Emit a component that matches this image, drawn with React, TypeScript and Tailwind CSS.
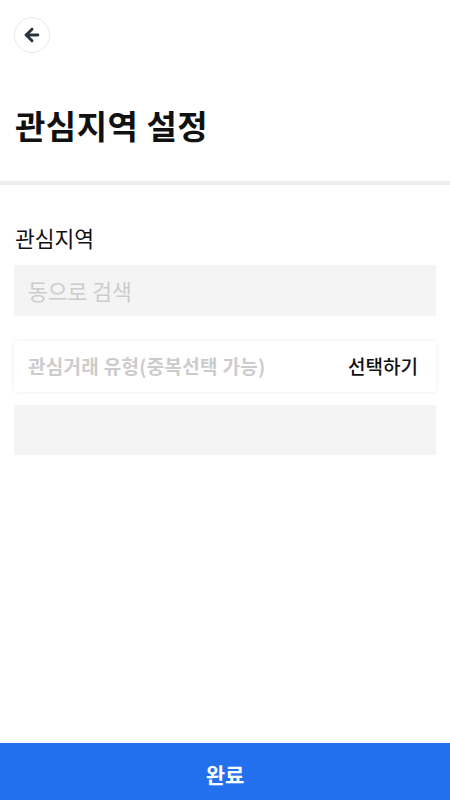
import { ArrowLeft } from "lucide-react";

const App = () => {
    return (
        <div
            className="relative w-[450px] h-[800px] bg-white flex flex-col"
            style={{ fontFamily: '"Noto Sans CJK KR", "Noto Sans", sans-serif' }}
        >
            {/* Header */}
            <div className="px-[14px] pt-[17px]">
                <button className="w-[36px] h-[36px] rounded-full border border-[#e8e8e8] flex items-center justify-center">
                    <ArrowLeft size={20} strokeWidth={3.5} className="text-[#2b3340]" />
                </button>
            </div>
            <h1 className="px-[15px] mt-[50px] text-[33px] font-bold leading-[44px] text-[#111] tracking-[0.5px]">관심지역 설정</h1>
            <div className="mt-[34px] h-[4px] bg-[#eeeeee]" />

            {/* Form */}
            <div className="px-[14px] pt-[37px] flex flex-col">
                <label className="text-[21.5px] leading-[32px] text-[#111] px-[1px]">관심지역</label>
                <input
                    type="text"
                    placeholder="동으로 검색"
                    className="mt-[11px] h-[51px] bg-[#f4f4f4] px-[14px] text-[21.5px] outline-none placeholder:text-[#cccccc]"
                />

                <div className="mt-[25px] h-[51px] bg-white shadow-[0_0_4px_rgba(0,0,0,0.08)] flex items-center justify-between px-[14px]">
                    <span className="text-[19px] font-semibold text-[#cccccc] tracking-[0.3px]">관심거래 유형(중복선택 가능)</span>
                    <button className="text-[19px] font-medium text-[#111] mr-[4px]">선택하기</button>
                </div>

                <div className="mt-[13px] h-[50px] bg-[#f4f4f4]" />
            </div>

            {/* Bottom button */}
            <button className="mt-auto h-[57px] pt-[6px] bg-[#2270ee] text-white text-[21px] font-bold">완료</button>
        </div>
    );
};

export default App;
